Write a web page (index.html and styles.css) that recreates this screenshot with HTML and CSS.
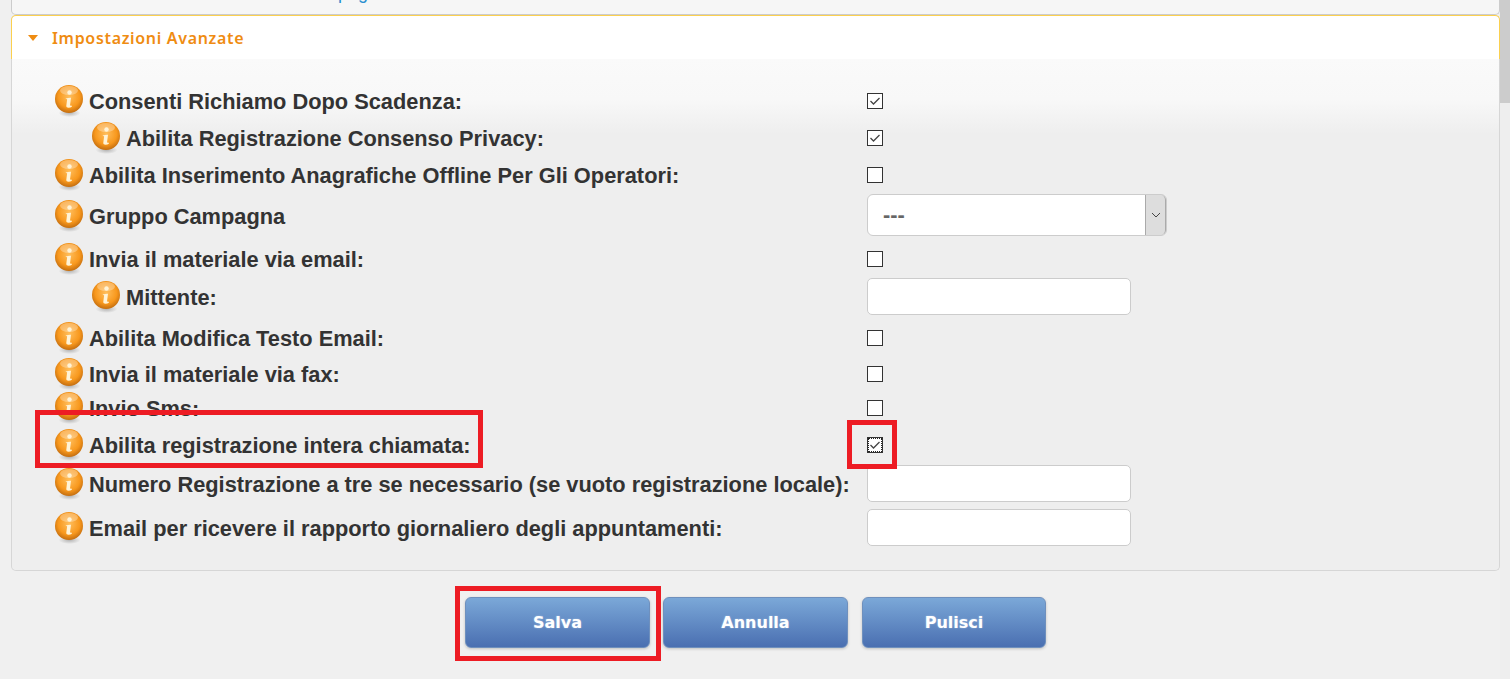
FILE: index.html
```html
<!DOCTYPE html>
<html lang="en">
<head>
  <meta charset="UTF-8" />
  <title>Impostazioni Avanzate</title>
  <link rel="stylesheet" href="styles.css">
</head>
<body>
  <svg class="defs" width="0" height="0">
    <defs>
      <radialGradient id="ball" cx="50%" cy="42%" r="62%">
        <stop offset="0" stop-color="#ffbe5c"/>
        <stop offset="0.62" stop-color="#f8981d"/>
        <stop offset="1" stop-color="#b9650c"/>
      </radialGradient>
      <radialGradient id="shade" cx="50%" cy="50%" r="50%">
        <stop offset="0" stop-color="#999" stop-opacity="0.7"/>
        <stop offset="1" stop-color="#999" stop-opacity="0"/>
      </radialGradient>
      <symbol id="info" viewBox="0 0 30 34">
        <ellipse cx="15.5" cy="29" rx="11" ry="4" fill="url(#shade)"/>
        <circle cx="15" cy="15" r="14" fill="url(#ball)"/>
        <ellipse cx="15" cy="6.5" rx="9" ry="4.5" fill="#fff" opacity="0.3"/>
        <circle cx="15.5" cy="8.5" r="2.2" fill="#fff3d6"/>
        <path d="M11.8 14.5c2-.8 3.8-1 5.2-.8l-.9 7c-.1 1 .4 1.3 1.6 .8l.2 1.2c-2.2 1.4-5.8 1.6-5.6-.9l.8-6c.1-.8-.5-1-1.3-.9z" fill="#fff3d6"/>
      </symbol>
    </defs>
  </svg>

  <main class="page">
    <div class="panel-stub"><a class="stub-link">pagina</a></div>

    <section class="panel">
      <h3 class="panel-title"><span class="caret"></span>Impostazioni Avanzate</h3>
      <div class="panel-body">
        <div class="row h36">
          <div class="label"><svg class="info"><use href="#info"/></svg>Consenti Richiamo Dopo Scadenza:</div>
          <input type="checkbox" class="check" checked>
        </div>
        <div class="row h37">
          <div class="label sub"><svg class="info"><use href="#info"/></svg>Abilita Registrazione Consenso Privacy:</div>
          <input type="checkbox" class="check" checked>
        </div>
        <div class="row h37">
          <div class="label"><svg class="info"><use href="#info"/></svg>Abilita Inserimento Anagrafiche Offline Per Gli Operatori:</div>
          <input type="checkbox" class="check">
        </div>
        <div class="row h44">
          <div class="label low"><svg class="info"><use href="#info"/></svg>Gruppo Campagna</div>
          <div class="select">
            <span class="select-value">---</span>
            <span class="select-arrow">
              <svg width="10" height="6" viewBox="0 0 10 6"><path d="M1 1l4 4 4-4" fill="none" stroke="#444" stroke-width="1"/></svg>
            </span>
          </div>
        </div>
        <div class="row h41 pad-top">
          <div class="label"><svg class="info"><use href="#info"/></svg>Invia il materiale via email:</div>
          <input type="checkbox" class="check">
        </div>
        <div class="row h40 pad-bottom">
          <div class="label sub"><svg class="info"><use href="#info"/></svg>Mittente:</div>
          <input type="text" class="text-input">
        </div>
        <div class="row h40">
          <div class="label"><svg class="info"><use href="#info"/></svg>Abilita Modifica Testo Email:</div>
          <input type="checkbox" class="check">
        </div>
        <div class="row h32">
          <div class="label"><svg class="info"><use href="#info"/></svg>Invia il materiale via fax:</div>
          <input type="checkbox" class="check">
        </div>
        <div class="row h36">
          <div class="label"><svg class="info"><use href="#info"/></svg>Invio Sms:</div>
          <input type="checkbox" class="check">
        </div>
        <div class="row h37">
          <div class="label"><svg class="info"><use href="#info"/></svg>Abilita registrazione intera chiamata:</div>
          <input type="checkbox" class="check focused" checked>
        </div>
        <div class="row h42 pad-bottom-2">
          <div class="label low"><svg class="info"><use href="#info"/></svg>Numero Registrazione a tre se necessario (se vuoto registrazione locale):</div>
          <input type="text" class="text-input">
        </div>
        <div class="row h44">
          <div class="label low"><svg class="info"><use href="#info"/></svg>Email per ricevere il rapporto giornaliero degli appuntamenti:</div>
          <input type="text" class="text-input">
        </div>
      </div>
    </section>

    <div class="actions">
      <button class="btn">Salva</button>
      <button class="btn">Annulla</button>
      <button class="btn">Pulisci</button>
    </div>
  </main>

  <div class="scrollbar"><div class="scroll-thumb"></div></div>

  <!-- red annotation boxes drawn over the screenshot -->
  <div class="mark mark-label"></div>
  <div class="mark mark-check"></div>
  <div class="mark mark-save"></div>
</body>
</html>
```

FILE: styles.css
```css
* {
  box-sizing: border-box;
}

html, body {
  height: 679px;
  overflow: hidden;
}

body {
  margin: 0;
  display: flex;
  position: relative;
  background: #f0f0f0;
  font-family: 'Liberation Sans', Arial, sans-serif;
  color: #333;
}

.defs {
  position: absolute;
}

.page {
  flex: 1;
  min-width: 0;
  padding-left: 11px;
}

.panel-stub {
  height: 15px;
  overflow: hidden;
  background: #f6f6f6;
  border: 1px solid #ccc;
  border-top: none;
  border-radius: 0 0 5px 5px;
}

.stub-link {
  display: block;
  margin-top: -17px;
  padding-left: 326px;
  font-size: 18px;
  line-height: 20px;
  color: #2a8fd0;
}

.panel {
  border: 1px solid #d6d6d6;
  border-top: none;
  border-radius: 5px;
  background: #eee;
  height: 556px;
}

.panel-title {
  height: 44px;
  display: flex;
  align-items: center;
  padding: 1px 0 0 16px;
  background: #fff;
  border: 1px solid #fbd04f;
  border-bottom: none;
  border-radius: 5px 5px 0 0;
  margin: 0 -1px;
  font-family: 'Noto Sans', sans-serif;
  font-size: 16px;
  font-weight: 600;
  letter-spacing: 0.68px;
  color: #ef8c12;
}

.caret {
  width: 0;
  height: 0;
  margin-right: 14px;
  border-left: 5px solid transparent;
  border-right: 5px solid transparent;
  border-top: 6px solid #ef8c12;
}

.panel-body {
  padding: 24px 0 0 42px;
  background: linear-gradient(#fafafa 0, #f8f8f8 40px, #eee 75px);
  height: 511px;
  border-radius: 0 0 5px 5px;
}

.row {
  display: flex;
  align-items: center;
}

.h32 { height: 32px; }
.h36 { height: 36px; }
.h37 { height: 37px; }
.h40 { height: 40px; }
.h41 { height: 41px; }
.h42 { height: 42px; }
.h44 { height: 44px; }

.pad-top { padding-top: 3px; }
.pad-bottom { padding-bottom: 3px; }
.pad-bottom-2 { padding-bottom: 2px; }

.label {
  width: 813px;
  flex-shrink: 0;
  display: flex;
  align-items: center;
  padding-top: 2px;
  font-size: 21.8px;
  font-weight: bold;
  white-space: nowrap;
}

.label.low {
  padding-top: 4px;
}

.label.sub {
  padding-left: 37px;
}

.info {
  width: 30px;
  height: 34px;
  margin: 0 5px 2px 0;
  flex-shrink: 0;
}

.check {
  appearance: none;
  width: 16px;
  height: 16px;
  margin: 0;
  background: #fff;
  border: 1px solid #333;
  border-radius: 0;
}

.check:checked {
  background: #fff url("data:image/svg+xml,%3Csvg xmlns='http://www.w3.org/2000/svg' width='14' height='14'%3E%3Cpath d='M2.5 7l3 3 6-6' fill='none' stroke='%23444' stroke-width='1.3'/%3E%3C/svg%3E") no-repeat center;
}

.check.focused {
  outline: 1px dotted #222;
  outline-offset: -2px;
}

.select {
  width: 300px;
  height: 42px;
  display: flex;
  background: #fff;
  border: 1px solid #ccc;
  border-radius: 6px;
  font-size: 21.8px;
  font-weight: bold;
  color: #666;
}

.select-value {
  flex: 1;
  align-self: center;
  padding-left: 15px;
}

.select-arrow {
  width: 21px;
  display: flex;
  align-items: center;
  justify-content: center;
  background: #ddd;
  border-left: 1px solid #aaa;
  border-right: 1px solid #aaa;
  border-radius: 0 5px 5px 0;
}

.text-input {
  width: 264px;
  height: 37px;
  background: #fff;
  border: 1px solid #ccc;
  border-radius: 5px;
}

.actions {
  display: flex;
  justify-content: center;
  gap: 13px;
  margin-top: 26px;
}

.btn {
  width: 185px;
  height: 51px;
  background: linear-gradient(#7ba8d8, #4a6fb1);
  border: 1px solid #6f90bd;
  border-radius: 6px;
  box-shadow: 0 1px 3px rgba(0, 0, 0, 0.2);
  font-family: 'DejaVu Sans', sans-serif;
  font-size: 16px;
  font-weight: bold;
  color: #fff;
  text-shadow: 0 0 2px rgba(255, 255, 255, 0.4);
}

.btn:last-child {
  width: 184px;
  margin-left: 1px;
}

.scrollbar {
  width: 10px;
  flex-shrink: 0;
  background: #eee;
}

.scroll-thumb {
  height: 103px;
  background: #ccc;
}

.mark {
  position: absolute;
  border: 5px solid #ed1c24;
}

.mark-label {
  left: 35px;
  top: 410px;
  width: 448px;
  height: 58px;
}

.mark-check {
  left: 847px;
  top: 420px;
  width: 50px;
  height: 49px;
}

.mark-save {
  left: 455px;
  top: 586px;
  width: 206px;
  height: 75px;
}
```
